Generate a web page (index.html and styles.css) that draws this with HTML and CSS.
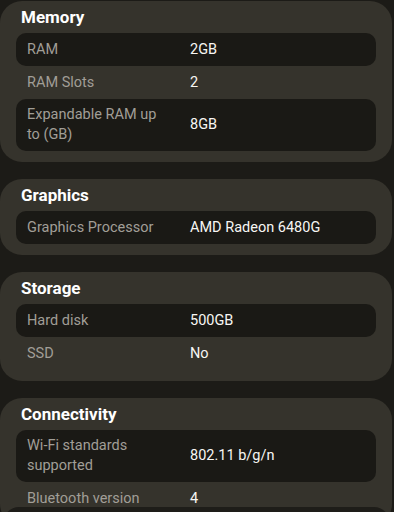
FILE: index.html
```html
<!DOCTYPE html>
<html>
<head>
<meta charset="utf-8">
<link rel="stylesheet" href="styles.css">
</head>
<body>
<div class="page">
  <section class="card">
    <h2 class="title">Memory</h2>
    <div class="row dark"><span class="label">RAM</span><span class="value">2GB</span></div>
    <div class="row"><span class="label">RAM Slots</span><span class="value">2</span></div>
    <div class="row dark"><span class="label">Expandable RAM up to (GB)</span><span class="value">8GB</span></div>
  </section>
  <section class="card">
    <h2 class="title">Graphics</h2>
    <div class="row dark"><span class="label">Graphics Processor</span><span class="value">AMD Radeon 6480G</span></div>
  </section>
  <section class="card">
    <h2 class="title">Storage</h2>
    <div class="row dark"><span class="label">Hard disk</span><span class="value">500GB</span></div>
    <div class="row"><span class="label">SSD</span><span class="value">No</span></div>
  </section>
  <section class="card">
    <h2 class="title">Connectivity</h2>
    <div class="row dark"><span class="label">Wi-Fi standards supported</span><span class="value">802.11 b/g/n</span></div>
    <div class="row"><span class="label">Bluetooth version</span><span class="value">4</span></div>
  </section>
</div>
<div class="sheet"></div>
</body>
</html>
```
FILE: styles.css
```css
html, body {
  margin: 0;
  padding: 0;
  background: #1c1b17;
}
body {
  font-family: Roboto, "Noto Sans", sans-serif;
  color: #f4f3f0;
  overflow: hidden;
}
.page {
  display: flex;
  flex-direction: column;
  gap: 17px;
  padding-top: 1px;
  padding-right: 2px;
}
.card {
  background: #35332c;
  border-radius: 22px;
  padding: 0 16px 11px 16px;
}
.title {
  margin: 0;
  height: 32px;
  line-height: 32px;
  padding-left: 5px;
  font-size: 17px;
  font-weight: 700;
  color: #ffffff;
}
.row {
  display: grid;
  grid-template-columns: 140px 1fr;
  column-gap: 23px;
  align-items: center;
  min-height: 33px;
  box-sizing: border-box;
  padding: 6px 11px;
  font-size: 14.5px;
  line-height: 20px;
  border-radius: 10px;
}
.row.dark {
  background: #1a1915;
}
.label {
  color: #a19e97;
}
.value {
  color: #f7f6f3;
}
.sheet {
  position: fixed;
  left: 3px;
  right: 4px;
  top: 507px;
  height: 20px;
  background: #1e1d19;
  border-radius: 16px 16px 0 0;
}
```
